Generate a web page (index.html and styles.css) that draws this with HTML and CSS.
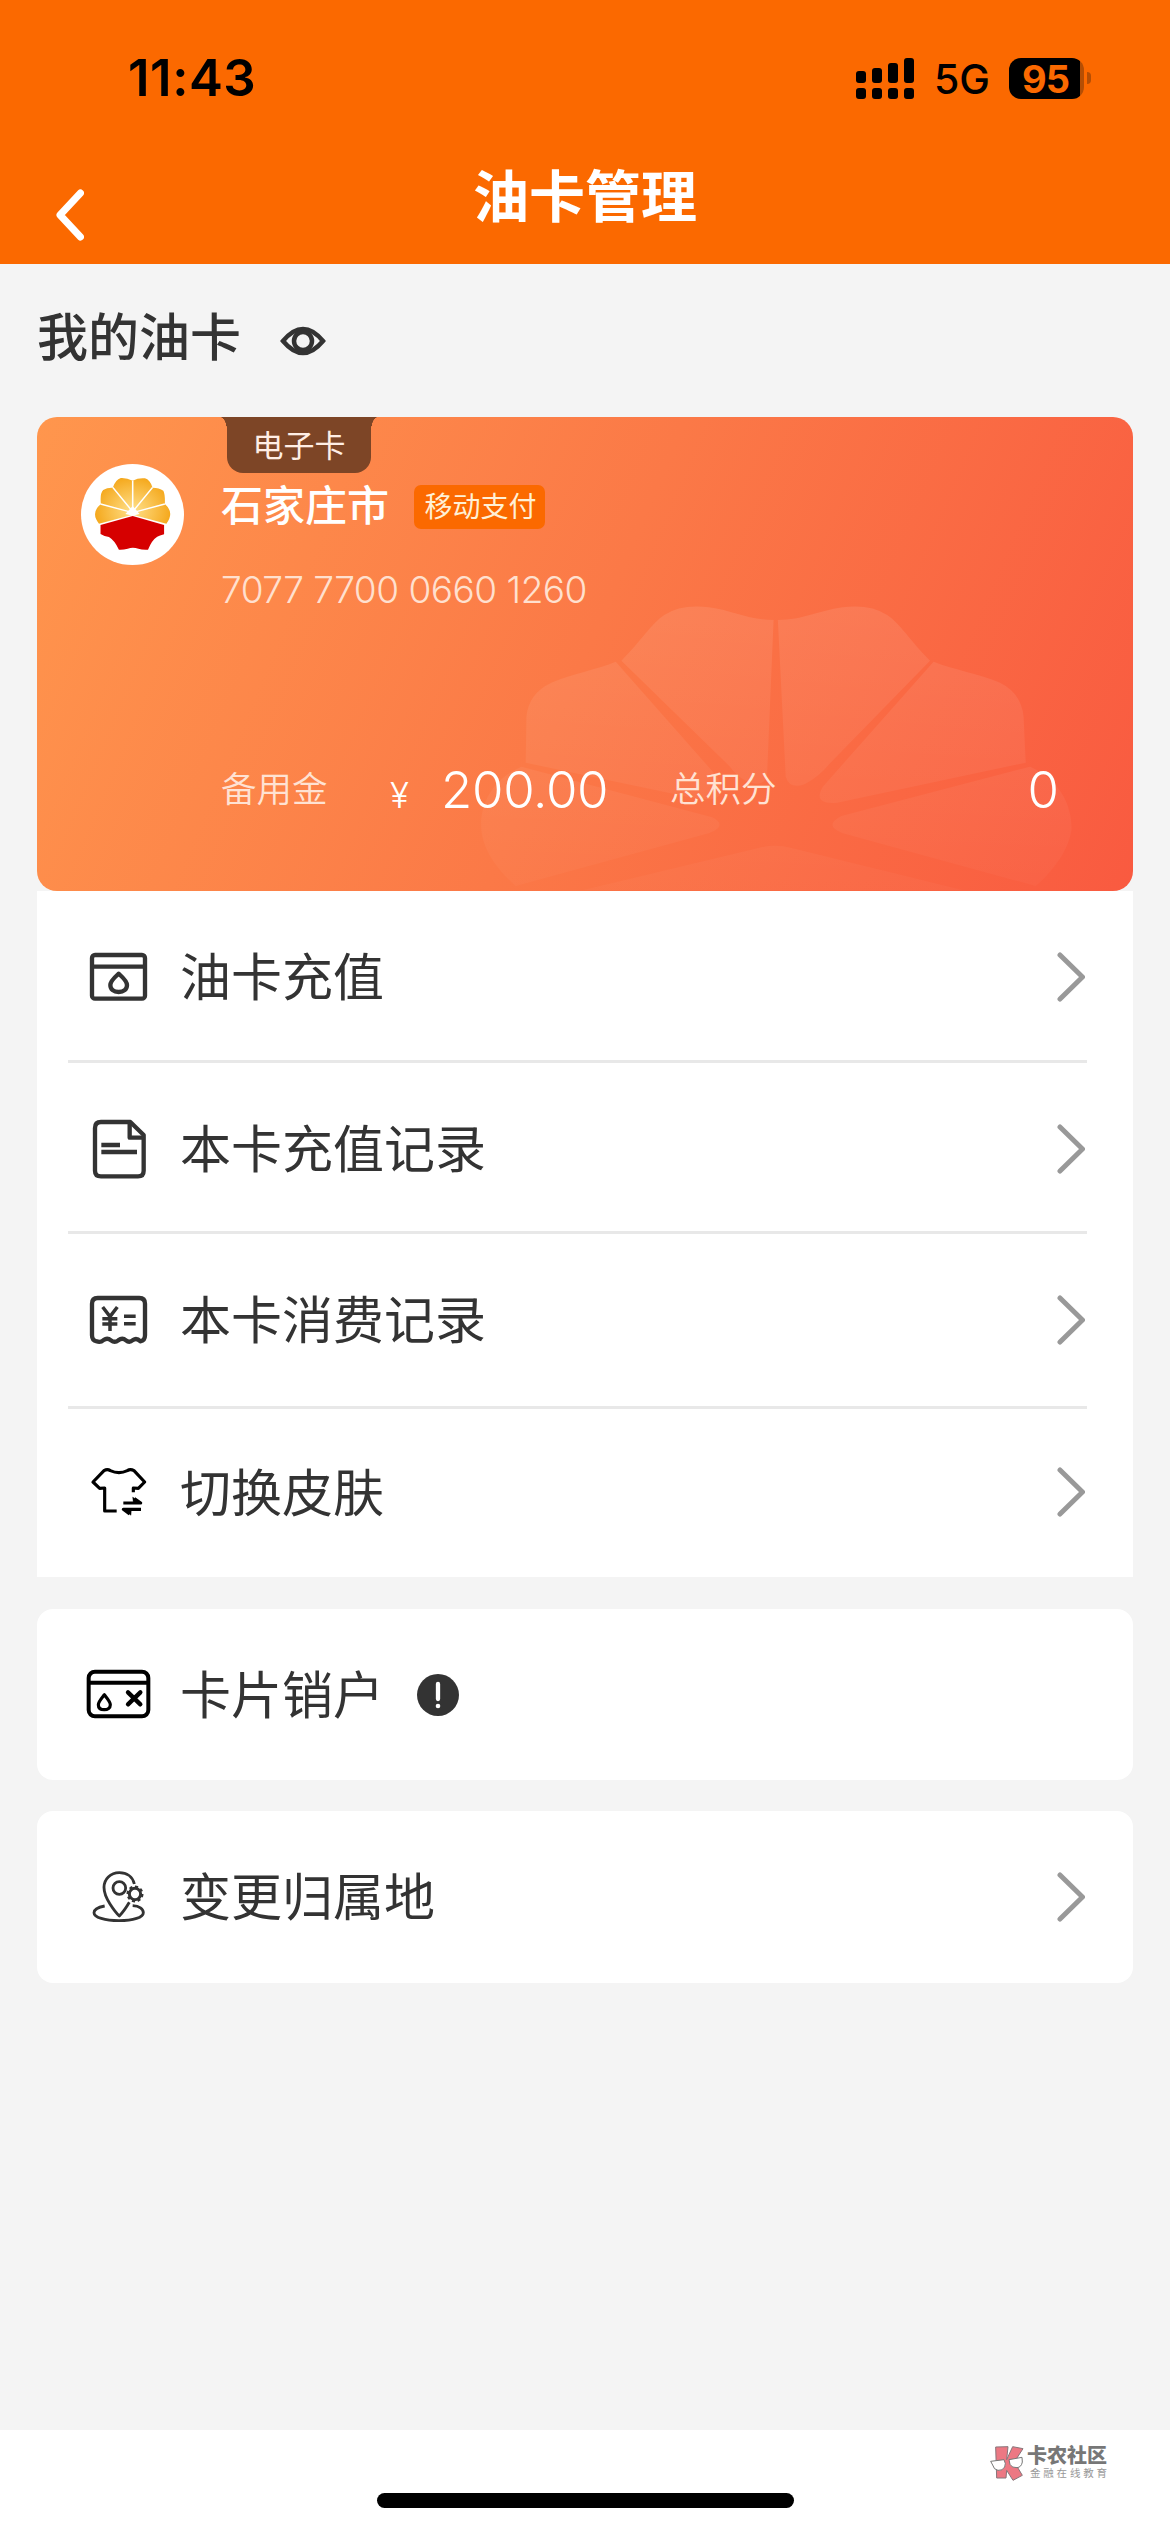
FILE: index.html
```
<!DOCTYPE html>
<html lang="zh-CN">
<head>
<meta charset="utf-8">
<title>油卡管理</title>
<link rel="stylesheet" href="styles.css">
</head>
<body>
<div class="screen">
  <header class="header">
    <div class="status">
      <span class="time">11:43</span>
      <div class="status-right">
        <svg class="signal" viewBox="0 0 58 41">
          <rect x="0" y="13" width="10" height="12" rx="3"/><rect x="16" y="10" width="10" height="15" rx="3"/><rect x="32" y="5" width="10" height="20" rx="3"/><rect x="48" y="0" width="10" height="25" rx="3"/>
          <rect x="0" y="30" width="10" height="11" rx="3"/><rect x="16" y="30" width="10" height="11" rx="3"/><rect x="32" y="30" width="10" height="11" rx="3"/><rect x="48" y="30" width="10" height="11" rx="3"/>
        </svg>
        <span class="network">5G</span>
        <div class="battery"><span class="battery-level">95</span></div>
        <span class="battery-nub"></span>
      </div>
    </div>
    <nav class="navbar">
      <svg class="back" viewBox="0 0 29 52"><path d="M25.500 4 L5 26 L25.500 48"/></svg>
      <h1 class="title">油卡管理</h1>
    </nav>
  </header>

  <main class="main">
    <div class="section-head">
      <h2 class="section-title">我的油卡</h2>
      <svg class="eye" viewBox="0 0 46 30"><path d="M3 15 Q23 -9 43 15 Q23 39 3 15Z"/><circle cx="23" cy="15" r="9"/></svg>
    </div>

    <section class="card">
      <svg class="card-flower" viewBox="0 0 1554 1050" preserveAspectRatio="none">
        <defs><linearGradient id="petal" x1="0" y1="140" x2="0" y2="980" gradientUnits="userSpaceOnUse"><stop offset="0" stop-color="#fff" stop-opacity=".09"/><stop offset="1" stop-color="#fff" stop-opacity=".025"/></linearGradient></defs>
        <g fill="url(#petal)">
          <path d="M828 302 C855 245 870 190 888 165 Q912 132 950 142 C985 152 1005 180 1041 180 L1032 640 Q1030 685 1005 665 Q990 650 980 620Z"/>
          <path d="M1260 302 C1233 245 1218 190 1200 165 Q1176 132 1138 142 C1103 152 1083 180 1047 180 L1058 650 Q1064 690 1085 672 Q1105 650 1120 610Z"/>
          <path d="M820 305 C792 330 760 340 730 368 Q698 400 695 470 L694 608 L930 715 Q985 730 962 650Z"/>
          <path d="M1265 305 C1294 330 1328 340 1358 368 Q1388 400 1391 470 L1394 608 L1130 728 Q1095 735 1110 680Z"/>
          <path d="M688 620 C645 660 629 740 632 810 C635 880 660 940 680 978 L950 820 Q978 797 955 772Z"/>
          <path d="M1400 620 C1443 660 1459 740 1458 810 C1453 880 1428 940 1408 978 L1138 820 Q1110 797 1136 768Z"/>
          <path d="M775 990 L1020 864 Q1043 850 1066 864 L1305 990Z"/>
        </g>
      </svg>
      <div class="card-tab">电子卡</div>
      <div class="card-top">
        <svg class="brand" viewBox="133 192 269 303" preserveAspectRatio="none">
          <defs><radialGradient id="gold" cx="268" cy="330" r="105" gradientUnits="userSpaceOnUse"><stop offset="0" stop-color="#ffe08a"/><stop offset="1" stop-color="#f4a516"/></radialGradient></defs>
          <ellipse cx="267.500" cy="343.500" rx="134.500" ry="151.500" fill="#fff"/>
          <path fill="url(#gold)" d="M180 371 Q157 338 185 312 Q182 280 191 270 Q202 262 216 263 Q223 239 237 234 Q253 233 268 242 Q283 233 300 235 Q313 239 320 263 Q337 263 348 272 Q353 283 352 312 Q378 338 356 371 L268 344Z"/>
          <path d="M268 242V335 M216 262L268 335 M320 262L268 335 M184 312L268 338 M352 312L268 338" stroke="#fff" stroke-width="4"/>
          <path d="M268 318L286 342L268 347L249 342Z" fill="#fff"/>
          <path fill="#d60000" d="M184 375 L268 348 L350 375 V403 Q338 407 332 410 Q318 420 308 449 Q292 450 283 446 Q268 440 255 446 Q242 450 232 449 Q220 420 206 411 Q195 410 184 402Z"/>
        </svg>
        <div class="card-info">
          <div class="city-line"><span class="city">石家庄市</span><span class="badge">移动支付</span></div>
          <div class="card-no">7077 7700 0660 1260</div>
        </div>
      </div>
      <div class="balance">
        <span class="label">备用金</span><span class="yen">¥</span><span class="amount">200.00</span>
        <span class="label points-label">总积分</span><span class="points">0</span>
      </div>
    </section>

    <section class="menu">
      <div class="row row-recharge">
        <svg class="icon" viewBox="36 63 216 216"><g class="thick"><rect x="66" y="105" width="159" height="131" rx="9"/><path d="M66 140H225 M146 161 C136 170 121 183 121 195 C121 208 131 216 146 216 C161 216 171 208 171 195 C171 183 156 170 146 161Z"/></g></svg>
        <span class="row-text">油卡充值</span>
        <svg class="chevron" viewBox="0 0 28 50"><path d="M3 3L25.500 25L3 47"/></svg>
      </div>
      <div class="row row-recharge-log">
        <svg class="icon" viewBox="36 579 216 216"><g class="thick"><path d="M93 606H181L221 645V752Q221 769 204 769H93Q75 769 75 752V624Q75 606 93 606Z"/><path d="M179 608V653H220 M94 675H150 M94 696H201"/></g></svg>
        <span class="row-text">本卡充值记录</span>
        <svg class="chevron" viewBox="0 0 28 50"><path d="M3 3L25.500 25L3 47"/></svg>
      </div>
      <div class="row row-spend-log">
        <svg class="icon" viewBox="36 72 216 216"><g class="thick"><path d="M80 244Q66 242 66 226V131Q66 114 83 114H208Q225 114 225 131V226Q225 242 211 244 Q200 232 189 240Q178 250 168 241Q157 232 145 241Q134 250 123 241Q112 232 101 240Q91 249 80 244Z"/></g><path class="bold" d="M98 141L120 170L142 141 M97 176H142 M97 192H142 M120 170V213 M162 169H197 M162 191H197"/></svg>
        <span class="row-text">本卡消费记录</span>
        <svg class="chevron" viewBox="0 0 28 50"><path d="M3 3L25.500 25L3 47"/></svg>
      </div>
      <div class="row row-skin">
        <svg class="icon black" viewBox="36 590 216 216"><path class="medium" d="M140 755H104V686L89 687L69 668L102 634Q112 628 121 634Q147 646 172 634Q181 628 192 634L224 668L205 687L190 686V699 M160 731H212L193 718 M213 750H160L179 764"/><path d="M188 713L213 731H190Z M183 768L160 750H184Z" fill="#000"/></svg>
        <span class="row-text">切换皮肤</span>
        <svg class="chevron" viewBox="0 0 28 50"><path d="M3 3L25.500 25L3 47"/></svg>
      </div>
    </section>

    <section class="panel">
      <svg class="icon black" viewBox="36 57 216 216"><g class="cardline"><rect x="56" y="95" width="179" height="134" rx="19"/><path d="M56 128H235"/></g><path class="medium" d="M103 164C96 173 85 185 85 194C85 204 92 209 103 209C113 209 121 204 121 194C121 185 110 173 103 164Z"/><path class="cross" d="M174 157L211 193M211 157L174 193"/></svg>
      <span class="row-text">卡片销户</span>
      <svg class="info" viewBox="0 0 42 42"><circle cx="21" cy="21" r="21" fill="#333"/><path d="M21 10V25" stroke="#fff" stroke-width="4.300" stroke-linecap="round"/><circle cx="21" cy="32" r="2.300" fill="#fff"/></svg>
    </section>

    <section class="panel">
      <svg class="icon" viewBox="36 664 216 216"><path class="thin" d="M193 733C188 711 170 699 148 699C121 699 102 719 102 743C102 760 109 776 120 793Q136 818 148 829Q162 815 178 788 M104 799C83 803 72 811 72 819C72 833 105 843 147 843C190 843 220 833 220 819C220 808 208 799 188 798"/><circle class="thin" cx="148" cy="745" r="19"/><circle class="gear" cx="195" cy="763" r="17"/><circle class="gear-teeth" cx="195" cy="763" r="22" pathLength="60"/></svg>
      <span class="row-text">变更归属地</span>
      <svg class="chevron" viewBox="0 0 28 50"><path d="M3 3L25.500 25L3 47"/></svg>
    </section>
  </main>

  <footer class="footer">
    <span class="home-bar"></span>
    <div class="mark">
      <svg class="mark-logo" viewBox="0 0 102 106"><g fill="#ec7883" stroke="#88757a" stroke-width="3"><path d="M17 5L54 4L50 43L68 4L99 10L73 50L97 90L69 105L50 75L48 98H20Z"/></g><g fill="#fff" stroke="#777" stroke-width="3"><path d="M2 48L42 43Q49 55 44 65Q37 77 24 75Q11 73 8 59Z"/><path d="M57 43L96 36L97 50Q94 66 81 67Q65 68 60 57Z"/></g></svg>
      <div class="mark-text"><span class="mark-name">卡农社区</span><span class="mark-sub">金融在线教育</span></div>
    </div>
  </footer>
</div>
</body>
</html>
```
FILE: styles.css
```
* { box-sizing: border-box; }
body { margin: 0; background: #f4f4f4; }
.screen {
  width: 1170px; height: 2532px;
  display: flex; flex-direction: column;
  font-family: "Noto Sans CJK SC", sans-serif;
  color: #333; background: #f4f4f4; overflow: hidden;
}
svg { display: block; flex: none; }
h1, h2 { margin: 0; }
span { white-space: nowrap; }

.header { height: 264px; background: #fb6900; color: #fff; }
.status { height: 156px; padding: 0 79px 0 128px; display: flex; align-items: center; justify-content: space-between; color: #000; font-family: Inter, sans-serif; }
.time { font-size: 51px; font-weight: 600; line-height: 60px; letter-spacing: 0.5px; }
.status-right { display: flex; align-items: center; }
.signal { width: 58px; height: 41px; }
.network { width: 95px; padding-left: 20px; font-size: 41px; line-height: 42px; padding-top: 2px; font-weight: 450; }
.battery { width: 75px; height: 41px; border-radius: 12px; background: linear-gradient(90deg, #000 71px, #b54e04 71px); color: #fb6900; padding-right: 2px; text-align: center; }
.battery-level { font-size: 38px; font-weight: 700; line-height: 42px; letter-spacing: -1px; }
.battery-nub { width: 4px; height: 12px; margin-left: 3px; background: #b54e04; border-radius: 0 4px 4px 0; }
.navbar { height: 108px; padding: 0 55px; display: grid; grid-template-columns: 29px 1fr 29px; }
.back { width: 29px; height: 52px; margin-top: 33px; fill: none; stroke: #fff; stroke-width: 7; stroke-linecap: round; stroke-linejoin: round; }
.title { text-align: center; font-size: 56px; line-height: 80px; font-weight: 700; margin-top: -3px; }

.main { flex: 1; padding: 0 37px; }
.section-head { height: 153px; display: flex; align-items: center; gap: 39px; }
.section-title { font-size: 51px; line-height: 72px; font-weight: 500; margin-top: -13px; }
.eye { width: 46px; height: 30px; fill: none; stroke: #333; stroke-width: 4.500; }

.card { position: relative; height: 474px; border-radius: 20px; overflow: hidden; background: linear-gradient(113deg, #ff964d 0%, #fb7947 50%, #f95a40 100%); color: #fff; }
.card-flower { position: absolute; left: -7px; top: 143px; width: 1110px; height: 350px; }
.card-tab { position: absolute; left: 190px; top: 0; width: 144px; height: 56px; border-radius: 0 0 16px 16px; background: #7d4526; color: #ffeee5; font-size: 31px; line-height: 53px; text-align: center; }
.card-tab::before, .card-tab::after { content: ""; position: absolute; top: 0; width: 7px; height: 14px; }
.card-tab::before { right: 100%; background: radial-gradient(ellipse 7px 14px at 0 100%, transparent 98%, #7d4526 100%); }
.card-tab::after { left: 100%; background: radial-gradient(ellipse 7px 14px at 100% 100%, transparent 98%, #7d4526 100%); }
.card-top { position: relative; display: flex; padding: 47px 0 0 44px; gap: 37px; }
.brand { width: 103px; height: 101px; }
.card-info { padding-top: 12px; }
.city-line { display: flex; align-items: center; gap: 25px; height: 60px; }
.city { font-size: 42px; line-height: 60px; font-weight: 500; margin-top: -6px; }
.badge { width: 131px; height: 44px; border-radius: 7px; background: #fb6900; color: #fff0d5; font-size: 28px; line-height: 41px; text-align: center; margin-top: 2px; padding-left: 2px; }
.card-no { font-family: Inter, sans-serif; font-weight: 300; font-size: 37px; line-height: 44px; margin-top: 32px; letter-spacing: -0.500px; color: #ffe0cf; white-space: nowrap; }
.balance { position: absolute; left: 184px; right: 74px; bottom: 68px; height: 66px; display: flex; align-items: baseline; }
.label { position: relative; top: -6px; font-size: 35.500px; line-height: 52px; font-weight: 350; color: #ffe2d3; width: 169px; }
.yen { width: 51px; font-family: Inter, sans-serif; font-size: 35px; font-weight: 300; }
.amount { width: 229px; font-family: Inter, sans-serif; font-size: 51px; line-height: 66px; font-weight: 350; letter-spacing: -0.300px; }
.points { margin-left: auto; font-family: Inter, sans-serif; font-size: 51px; font-weight: 350; }

.menu { height: 686px; background: #fff; }
.row, .panel { position: relative; display: flex; align-items: center; padding: 0 48px 0 45px; }
.row:not(:last-child)::after { content: ""; position: absolute; left: 31px; right: 46px; bottom: 0; height: 3px; background: #e8e8e8; }
.row-recharge { height: 172px; }
.row-recharge-log { height: 171px; }
.row-spend-log { height: 175px; padding-bottom: 4px; }
.row-skin { height: 168px; padding-bottom: 3px; }
.icon { width: 72px; height: 72px; fill: none; stroke: #333; }
.icon.black { stroke: #000; }
.thick { stroke-width: 13; stroke-linejoin: round; }
.bold { stroke-width: 10.500; }
.medium { stroke-width: 9.500; stroke-linejoin: round; }
.thin { stroke-width: 8.500; stroke-linejoin: round; }
.cardline { stroke-width: 12; }
.cross { stroke-width: 13; stroke-linecap: round; }
.gear { stroke-width: 9; }
.gear-teeth { stroke-width: 7; stroke-dasharray: 4 3.500; }
.row-text { margin-left: 26px; font-size: 51px; line-height: 72px; margin-top: -6px; }
.row-skin .row-text { margin-top: -4px; }
.chevron { width: 28px; height: 50px; margin-left: auto; fill: none; stroke: #999; stroke-width: 5; stroke-linecap: round; stroke-linejoin: round; }
.panel { height: 171px; margin-top: 32px; border-radius: 16px; background: #fff; }
.panel + .panel { height: 172px; margin-top: 31px; }
.info { width: 42px; height: 42px; margin-left: 33px; }

.footer { position: relative; height: 102px; background: #fff; display: flex; justify-content: center; align-items: flex-end; padding-bottom: 24px; }
.home-bar { width: 417px; height: 15px; border-radius: 8px; background: #000; }
.mark { position: absolute; left: 990px; top: 15px; display: flex; gap: 3px; }
.mark-logo { width: 34px; height: 36px; }
.mark-text { display: flex; flex-direction: column; }
.mark-name { font-size: 20px; line-height: 20px; font-weight: 900; color: #777; }
.mark-sub { font-size: 10.500px; line-height: 14px; margin-top: 1px; letter-spacing: 2.800px; color: #999; padding-left: 3px; }
```
